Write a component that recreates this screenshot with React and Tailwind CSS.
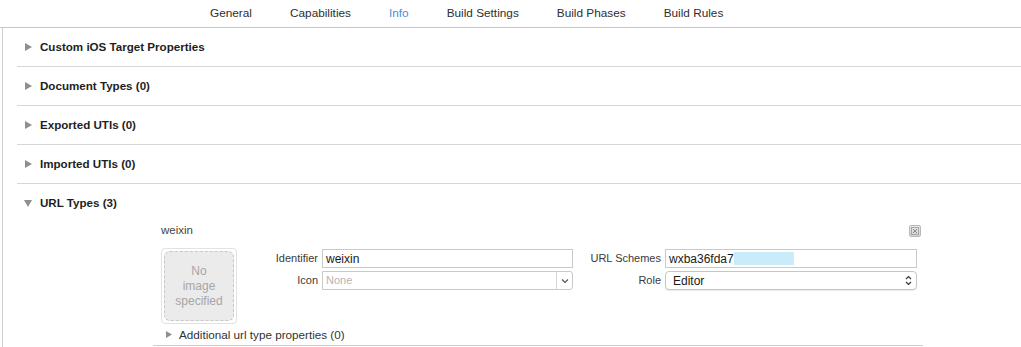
import React from 'react'

const tabs = ['General', 'Capabilities', 'Info', 'Build Settings', 'Build Phases', 'Build Rules']
const sections = ['Custom iOS Target Properties', 'Document Types (0)', 'Exported UTIs (0)', 'Imported UTIs (0)']

function RightTriangle({ size = 'big' }) {
  if (size === 'small') {
    return (
      <svg width="6" height="7" viewBox="0 0 6 7">
        <polygon points="0,0 6,3.5 0,7" fill="#8f8f8f" />
      </svg>
    )
  }
  return (
    <svg width="7" height="8" viewBox="0 0 7 8">
      <polygon points="0,0 7,4 0,8" fill="#8f8f8f" />
    </svg>
  )
}

function DownTriangle() {
  return (
    <svg width="8" height="7" viewBox="0 0 8 7">
      <polygon points="0,0 8,0 4,7" fill="#8f8f8f" />
    </svg>
  )
}

export default function App() {
  return (
    <div className="w-[1021px] h-[347px] bg-white overflow-hidden flex flex-col font-['Liberation_Sans',Arial,sans-serif] text-[#2b2b2b]">
      {/* Tab bar */}
      <div className="h-[28px] shrink-0 border-b border-[#c6c6c6] flex items-center pl-[210px] gap-[38px] text-[11.8px]">
        {tabs.map(t => (
          <span key={t} className={t === 'Info' ? 'text-[#4a8fd2]' : 'text-[#2e2e2e]'}>{t}</span>
        ))}
      </div>

      {/* Content */}
      <div className="flex-1 ml-[2px] border-l border-[#cfcfcf] pl-[14px]">
        {sections.map(s => (
          <div key={s} className="h-[39px] border-b border-[#d6d6d6] flex items-center pl-[8px]">
            <RightTriangle />
            <span className="ml-[8px] text-[11.6px] font-bold text-[#1e1e1e]">{s}</span>
          </div>
        ))}

        {/* URL Types */}
        <div className="h-[38px] flex items-center pl-[7px]">
          <DownTriangle />
          <span className="ml-[8px] text-[11.6px] font-bold text-[#1e1e1e]">URL Types (3)</span>
        </div>

        <div className="ml-[136px] w-[770px] border-b border-[#cdcdcd]">
          <div className="h-[18px] flex items-center justify-between pl-[8px] pr-[2px]">
            <span className="text-[11.5px] text-[#444]">weixin</span>
            <div className="w-[12px] h-[12px] rounded-[2px] border border-[#b8b8b8] bg-gradient-to-b from-[#e8e8e8] to-[#d2d2d2] flex items-center justify-center">
              <svg width="8" height="8" viewBox="0 0 8 8">
                <rect x="0.5" y="0.5" width="7" height="7" fill="none" stroke="#9a9a9a" strokeWidth="0.8" />
                <path d="M2 2 L6 6 M6 2 L2 6" stroke="#8a8a8a" strokeWidth="1" />
              </svg>
            </div>
          </div>

          <div className="flex mt-[8px] pl-[8px]">
            {/* Image well */}
            <div className="w-[76px] h-[76px] rounded-[4px] border border-[#e2e2e2] p-[2px]">
              <div className="w-full h-full rounded-[6px] border border-dashed border-[#c8c8c8] bg-[#ebebeb] flex items-center justify-center text-center text-[12px] leading-[15px] text-[#a6a6a6]">
                No<br />image<br />specified
              </div>
            </div>

            <div className="ml-[1px] mt-[1px] grid grid-cols-[80px_251px_84px_252px] grid-rows-[19px_19px] gap-x-[4px] gap-y-[3px] text-[11px]">
              <div className="flex items-center justify-end text-[#3a3a3a]">Identifier</div>
              <div className="border border-[#c9c9c9] bg-white flex items-center pl-[3px] text-[12px] text-[#1a1a1a]">weixin</div>
              <div className="flex items-center justify-end text-[#3a3a3a]">URL Schemes</div>
              <div className="border border-[#c9c9c9] bg-white flex items-center pl-[3px] text-[12px] text-[#1a1a1a]">
                <span>wxba36fda7</span>
                <span className="w-[60px] h-[13px] bg-[#c9ebfa]" />
              </div>

              <div className="flex items-center justify-end text-[#3a3a3a]">Icon</div>
              <div className="border border-[#c9c9c9] rounded-r-[3px] bg-white flex items-stretch">
                <div className="flex-1 flex items-center pl-[3px] text-[11px] text-[#b4b4b4]">None</div>
                <div className="w-[16px] border-l border-[#d6d6d6] flex items-center justify-center">
                  <svg width="8" height="6" viewBox="0 0 8 6">
                    <path d="M1 1.5 L4 4.5 L7 1.5" fill="none" stroke="#555" strokeWidth="1.2" />
                  </svg>
                </div>
              </div>
              <div className="flex items-center justify-end text-[#3a3a3a]">Role</div>
              <div className="border border-[#c6c6c6] rounded-[4px] bg-white shadow-[0_1px_1px_rgba(0,0,0,0.08)] flex items-center justify-between pl-[7px] pr-[4px] text-[12px] text-[#1a1a1a]">
                <span>Editor</span>
                <svg width="7" height="11" viewBox="0 0 7 11">
                  <path d="M1 4 L3.5 1.5 L6 4 M1 7 L3.5 9.5 L6 7" fill="none" stroke="#333" strokeWidth="1.1" />
                </svg>
              </div>
            </div>
          </div>

          <div className="h-[21px] flex items-center pl-[13px]">
            <RightTriangle size="small" />
            <span className="ml-[7px] text-[11.7px] text-[#333]">Additional url type properties (0)</span>
          </div>
        </div>
      </div>
    </div>
  )
}
